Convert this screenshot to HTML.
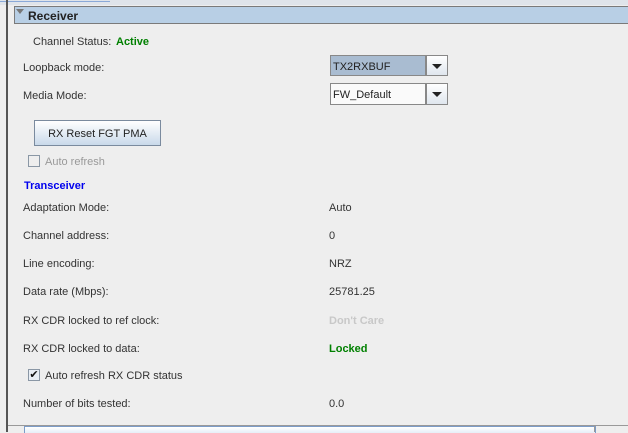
<!DOCTYPE html>
<html><head><style>
body{margin:0;width:628px;height:432px;background:#eeeeee;position:relative;overflow:hidden;font-family:"Liberation Sans",sans-serif;font-size:11px;color:#333}
.a{position:absolute;white-space:nowrap}
.t{margin-top:1px}
.v{left:329px}
.l{left:23px}
</style></head><body>
<div class="a" style="left:0;top:0;width:628px;height:5px;background:#dfe4ea"></div>
<div class="a" style="left:0;top:1px;width:110px;height:1px;background:#8aa9d8"></div>
<div class="a" style="left:6px;top:0;width:2px;height:432px;background:#555"></div>
<div class="a" style="left:14px;top:6px;width:614px;height:16px;background:#b8cfe5;border:1px solid #7a7a7a;border-right:none"></div>
<div class="a" style="left:16px;top:9px;width:0;height:0;border-left:4px solid transparent;border-right:4px solid transparent;border-top:5px solid #777"></div>
<div class="a" style="left:28px;top:9px;font-weight:bold;font-size:12px;color:#222">Receiver</div>
<div class="a t" style="left:33px;top:35px">Channel Status:</div>
<div class="a t" style="left:116px;top:35px;color:#008000;font-weight:bold">Active</div>
<div class="a l t" style="top:61px">Loopback mode:</div>
<div class="a l t" style="top:89px">Media Mode:</div>
<div class="a" style="left:330px;top:55px;width:96px;height:21px;background:#a9bcd1;border:1px solid #888;box-sizing:border-box;padding:5px 2px 0;color:#222">TX2RXBUF</div>
<div class="a" style="left:426px;top:55px;width:22px;height:21px;background:linear-gradient(#fff,#dfe6ee);border:1px solid #888;box-sizing:border-box"></div>
<div class="a" style="left:432px;top:64px;border-left:5px solid transparent;border-right:5px solid transparent;border-top:5px solid #222"></div>
<div class="a" style="left:330px;top:83px;width:96px;height:22px;background:#fafafa;border:1px solid #888;box-sizing:border-box;padding:5px 2px 0;color:#222">FW_Default</div>
<div class="a" style="left:426px;top:83px;width:22px;height:22px;background:linear-gradient(#fff,#dfe6ee);border:1px solid #888;box-sizing:border-box"></div>
<div class="a" style="left:432px;top:92px;border-left:5px solid transparent;border-right:5px solid transparent;border-top:5px solid #222"></div>
<div class="a" style="left:34px;top:120px;width:127px;height:26px;box-sizing:border-box;border:1px solid #7a8a9e;background:linear-gradient(#fff,#c9d9ea);text-align:center;line-height:26px;color:#222">RX Reset FGT PMA</div>
<div class="a" style="left:28px;top:155px;width:12px;height:12px;border:1px solid #8a97a5;box-sizing:border-box"></div>
<div class="a t" style="left:45px;top:155px;color:#999">Auto refresh</div>
<div class="a t" style="left:24px;top:179px;color:#0000ee;font-weight:bold">Transceiver</div>
<div class="a l t" style="top:201px">Adaptation Mode:</div><div class="a v t" style="top:201px">Auto</div>
<div class="a l t" style="top:229px">Channel address:</div><div class="a v t" style="top:229px">0</div>
<div class="a l t" style="top:257px">Line encoding:</div><div class="a v t" style="top:257px">NRZ</div>
<div class="a l t" style="top:285px">Data rate (Mbps):</div><div class="a v t" style="top:285px">25781.25</div>
<div class="a l t" style="top:314px">RX CDR locked to ref clock:</div><div class="a v t" style="top:314px;color:#c8c8c8;font-weight:bold">Don't Care</div>
<div class="a l t" style="top:342px">RX CDR locked to data:</div><div class="a v t" style="top:342px;color:#008000;font-weight:bold">Locked</div>
<div class="a" style="left:28px;top:369px;width:12px;height:12px;border:1px solid #8a97a5;box-sizing:border-box;background:#e8eef5;font-size:11px;line-height:10px;text-align:center;color:#111">✔</div>
<div class="a t" style="left:45px;top:369px">Auto refresh RX CDR status</div>
<div class="a l t" style="top:397px">Number of bits tested:</div><div class="a v t" style="top:397px">0.0</div>
<div class="a" style="left:8px;top:425px;width:620px;height:7px;background:#eeeeee;border-top:1px solid #999"></div>
<div class="a" style="left:24px;top:426px;width:570px;height:6px;background:linear-gradient(#fff,#e6eef8);border:1px solid #7c9cc8;border-bottom:none"></div>
<div class="a" style="left:594px;top:425px;width:1px;height:7px;background:#999"></div>
</body></html>
